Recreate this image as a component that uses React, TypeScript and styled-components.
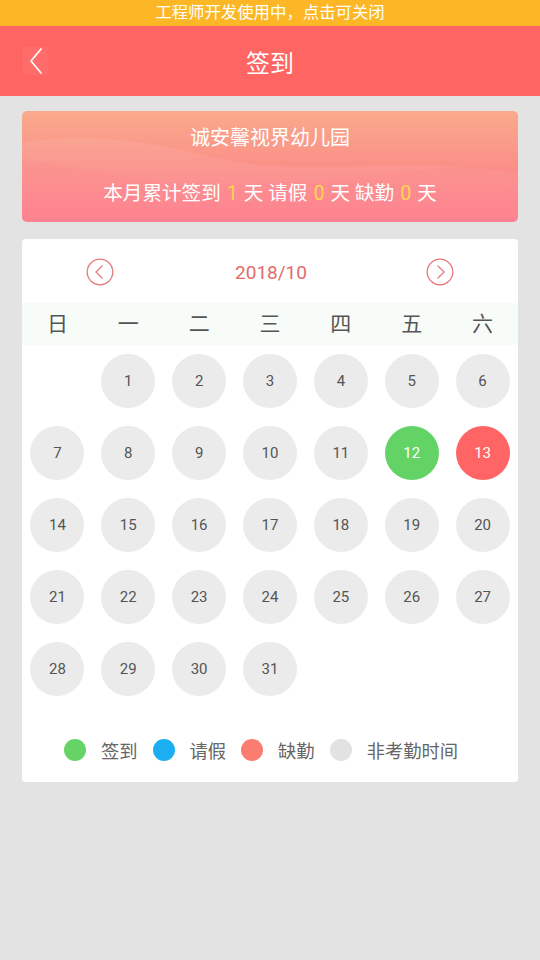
import React from "react";
import styled, { createGlobalStyle } from "styled-components";

const Global = createGlobalStyle`
  html, body { margin: 0; padding: 0; }
  body {
    background: #e3e3e3;
    font-family: Roboto, "Noto Sans CJK SC", sans-serif;
    width: 540px;
    min-height: 960px;
  }
`;

const Page = styled.div`
  width: 540px;
  min-height: 960px;
  background: #e3e3e3;
  display: flex;
  flex-direction: column;
`;

const DevBar = styled.div`
  height: 26px;
  background: #fdb726;
  color: #fff;
  font-size: 16.4px;
  line-height: 26px;
  text-align: center;
`;

const Header = styled.div`
  height: 70px;
  background: #ff6562;
  display: flex;
  align-items: center;
  justify-content: center;
  position: relative;
  color: #fff;
  font-size: 24px;
`;

const BackBtn = styled.div`
  position: absolute;
  left: 23px;
  top: 21px;
  width: 25px;
  height: 28px;
  background: rgba(255, 255, 255, 0.05);
  display: flex;
  align-items: center;
  justify-content: center;
`;

const Content = styled.div`
  padding: 15px 22px;
  display: flex;
  flex-direction: column;
  gap: 17px;
`;

const Summary = styled.div`
  height: 111px;
  border-radius: 5px;
  position: relative;
  overflow: hidden;
  background: linear-gradient(180deg, #f9aa8c 0%, #fb9088 50%, #fe7a8a 100%);
  display: flex;
  flex-direction: column;
  align-items: center;
  color: #fff;
`;

const Waves = styled.svg`
  position: absolute;
  left: 0;
  top: 0;
  width: 100%;
  height: 100%;
`;

const SchoolName = styled.div`
  position: relative;
  margin-top: 13px;
  font-size: 20px;
  line-height: 28px;
`;

const Stats = styled.div`
  position: relative;
  margin-top: 28px;
  font-size: 19.6px;
  line-height: 28px;
`;

const Num = styled.span`
  color: #ffd550;
  margin: 0 6px;
`;

const Calendar = styled.div`
  background: #fff;
  border-radius: 4px;
  padding-bottom: 17px;
`;

const MonthNav = styled.div`
  height: 64px;
  display: flex;
  align-items: center;
  justify-content: space-between;
  padding: 2px 63px 0 63px;
  box-sizing: border-box;
`;

const NavBtn = styled.div`
  width: 30px;
  height: 30px;
  display: flex;
  align-items: center;
  justify-content: center;
`;

const MonthLabel = styled.div`
  color: #e26b6b;
  font-size: 19px;
  margin-left: 2px;
`;

const WeekRow = styled.div`
  display: grid;
  grid-template-columns: repeat(7, 1fr);
  height: 42px;
  align-items: center;
  background: #f8fcf9;
`;

const WeekDay = styled.div`
  text-align: center;
  color: #555;
  font-size: 21px;
  line-height: 38px;
  padding-bottom: 4px;
  font-family: "Noto Sans CJK SC", sans-serif;
`;

const Grid = styled.div`
  display: grid;
  grid-template-columns: repeat(7, 1fr);
  grid-auto-rows: 72px;
`;

const Cell = styled.div`
  display: flex;
  align-items: center;
  justify-content: center;
`;

const Day = styled.div<{ $status: "none" | "sign" | "absent" }>`
  width: 54px;
  height: 54px;
  border-radius: 50%;
  display: flex;
  align-items: center;
  justify-content: center;
  font-size: 15px;
  background: ${(p) =>
    p.$status === "sign" ? "#63d365" : p.$status === "absent" ? "#fe6564" : "#ebebeb"};
  color: ${(p) => (p.$status === "none" ? "#555" : "#fff")};
`;

const Legend = styled.div`
  display: flex;
  justify-content: center;
  align-items: center;
  margin-top: 30px;
  height: 30px;
  padding-right: 18px;
`;

const LegendItem = styled.div`
  display: flex;
  align-items: center;
  margin-right: 15px;
  &:last-child { margin-right: 0; }
`;

const Dot = styled.span<{ $color: string }>`
  width: 22px;
  height: 22px;
  border-radius: 50%;
  background: ${(p) => p.$color};
  margin-right: 15px;
`;

const LegendText = styled.span`
  color: #666;
  font-size: 18.3px;
  font-family: "Noto Sans CJK SC", sans-serif;
`;

const weekdays = ["日", "一", "二", "三", "四", "五", "六"];

const BackChevron = () => (
  <svg width="16" height="28" viewBox="0 0 16 28" fill="none">
    <path d="M13 2 L3 14 L13 26" stroke="#fff" strokeWidth="1.7" strokeLinecap="round" strokeLinejoin="round" />
  </svg>
);

const CircleArrow = ({ dir }: { dir: "l" | "r" }) => (
  <svg width="28" height="28" viewBox="0 0 28 28" fill="none">
    <circle cx="14" cy="14" r="12.8" stroke="#e57a7a" strokeWidth="1.3" />
    <path
      d={dir === "l" ? "M16 8 L10 14 L16 20" : "M12 8 L18 14 L12 20"}
      stroke="#e57a7a"
      strokeWidth="1.3"
      strokeLinecap="round"
      strokeLinejoin="round"
    />
  </svg>
);

const legend = [
  { c: "#66d367", t: "签到" },
  { c: "#1caef2", t: "请假" },
  { c: "#fb7d72", t: "缺勤" },
  { c: "#e2e2e2", t: "非考勤时间" },
];

export default function App() {
  const cells: (number | null)[] = [null];
  for (let d = 1; d <= 31; d++) cells.push(d);
  return (
    <Page>
      <Global />
      <DevBar>工程师开发使用中，点击可关闭</DevBar>
      <Header>
        <BackBtn>
          <BackChevron />
        </BackBtn>
        签到
      </Header>
      <Content>
        <Summary>
          <Waves viewBox="0 0 496 111" preserveAspectRatio="none">
            <path
              d="M0 32 C 50 22, 110 26, 190 46 C 280 68, 380 44, 496 62 L496 111 L0 111 Z"
              fill="rgba(255,255,255,0.07)"
            />
            <path
              d="M0 48 C 90 62, 150 78, 260 72 C 360 66, 430 50, 496 58 L496 111 L0 111 Z"
              fill="rgba(255,120,140,0.12)"
            />
          </Waves>
          <SchoolName>诚安馨视界幼儿园</SchoolName>
          <Stats>
            本月累计签到<Num>1</Num>天 请假<Num>0</Num>天 缺勤<Num>0</Num>天
          </Stats>
        </Summary>
        <Calendar>
          <MonthNav>
            <NavBtn>
              <CircleArrow dir="l" />
            </NavBtn>
            <MonthLabel>2018/10</MonthLabel>
            <NavBtn>
              <CircleArrow dir="r" />
            </NavBtn>
          </MonthNav>
          <WeekRow>
            {weekdays.map((w) => (
              <WeekDay key={w}>{w}</WeekDay>
            ))}
          </WeekRow>
          <Grid>
            {cells.map((d, i) => (
              <Cell key={i}>
                {d !== null && (
                  <Day $status={d === 12 ? "sign" : d === 13 ? "absent" : "none"}>{d}</Day>
                )}
              </Cell>
            ))}
          </Grid>
          <Legend>
            {legend.map((l) => (
              <LegendItem key={l.t}>
                <Dot $color={l.c} />
                <LegendText>{l.t}</LegendText>
              </LegendItem>
            ))}
          </Legend>
        </Calendar>
      </Content>
    </Page>
  );
}
